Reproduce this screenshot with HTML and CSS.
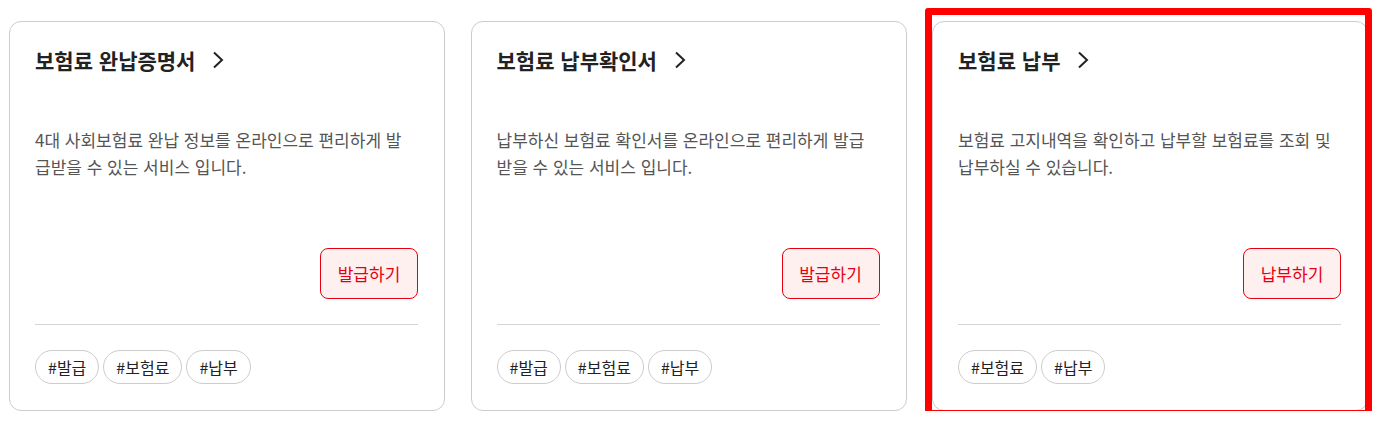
FILE: index.html
```html
<!DOCTYPE html>
<html lang="ko">
<head>
    <meta charset="UTF-8">
    <meta name="viewport" content="width=device-width, initial-scale=1.0">
    <title>보험료 서비스</title>
    <link rel="stylesheet" href="styles.css">
</head>
<body>
    <div class="cards">
        <div class="card">
            <a class="card-title" href="#">보험료 완납증명서
                <svg class="chevron" viewBox="0 0 12 18" width="12" height="18"><path d="M2 1.5 L10 9 L2 16.5" fill="none" stroke="#222" stroke-width="2"/></svg>
            </a>
            <p class="card-desc">4대 사회보험료 완납 정보를 온라인으로 편리하게 발급받을 수 있는 서비스 입니다.</p>
            <div class="card-action">
                <button type="button" class="btn-line">발급하기</button>
            </div>
            <div class="tags">
                <span class="tag">#발급</span>
                <span class="tag">#보험료</span>
                <span class="tag">#납부</span>
            </div>
        </div>

        <div class="card">
            <a class="card-title" href="#">보험료 납부확인서
                <svg class="chevron" viewBox="0 0 12 18" width="12" height="18"><path d="M2 1.5 L10 9 L2 16.5" fill="none" stroke="#222" stroke-width="2"/></svg>
            </a>
            <p class="card-desc">납부하신 보험료 확인서를 온라인으로 편리하게 발급받을 수 있는 서비스 입니다.</p>
            <div class="card-action">
                <button type="button" class="btn-line">발급하기</button>
            </div>
            <div class="tags">
                <span class="tag">#발급</span>
                <span class="tag">#보험료</span>
                <span class="tag">#납부</span>
            </div>
        </div>

        <div class="card is-selected">
            <a class="card-title" href="#">보험료 납부
                <svg class="chevron" viewBox="0 0 12 18" width="12" height="18"><path d="M2 1.5 L10 9 L2 16.5" fill="none" stroke="#222" stroke-width="2"/></svg>
            </a>
            <p class="card-desc">보험료 고지내역을 확인하고 납부할 보험료를 조회 및 납부하실 수 있습니다.</p>
            <div class="card-action">
                <button type="button" class="btn-line">납부하기</button>
            </div>
            <div class="tags">
                <span class="tag">#보험료</span>
                <span class="tag">#납부</span>
            </div>
            <span class="focus-ring"></span>
        </div>
    </div>
</body>
</html>
```

FILE: styles.css
```css
* {
    box-sizing: border-box;
}

body {
    margin: 0;
    padding: 0;
    background-color: #fff;
    font-family: "Noto Sans CJK KR", "Noto Sans", sans-serif;
    color: #222;
}

.cards {
    display: flex;
    gap: 25.5px;
    padding: 21px 0 0 9px;
}

.card {
    position: relative;
    display: flex;
    flex-direction: column;
    width: 436px;
    height: 390px;
    padding: 22px 26px 0 25px;
    border: 1px solid #ccc;
    border-radius: 12px;
    background-color: #fff;
}

.card-title {
    display: flex;
    align-items: center;
    gap: 17px;
    height: 31px;
    font-size: 21px;
    font-weight: bold;
    color: #222;
    text-decoration: none;
}

.chevron {
    margin-top: 1px;
}

.card-desc {
    margin: 51px 3px 0 0;
    height: 56px;
    font-size: 17px;
    line-height: 27px;
    color: #555;
}

.card-action {
    display: flex;
    justify-content: flex-end;
    margin-top: 66px;
}

.btn-line {
    width: 98px;
    height: 51px;
    border: 1px solid #e60012;
    border-radius: 8px;
    background-color: #fff0f0;
    color: #e60012;
    font-family: inherit;
    font-size: 17px;
    cursor: pointer;
}

.tags {
    display: flex;
    gap: 4px;
    margin-top: 25px;
    padding-top: 25px;
    border-top: 1px solid #d5d5d5;
}

.tag {
    display: inline-flex;
    align-items: center;
    height: 34px;
    padding: 0 12px;
    border: 1px solid #ccc;
    border-radius: 17px;
    font-size: 16px;
    color: #222;
}

.focus-ring {
    position: absolute;
    top: -14px;
    left: -8px;
    right: -5px;
    bottom: -7px;
    border: 7px solid #ff0000;
    border-radius: 3px;
    pointer-events: none;
}
```
